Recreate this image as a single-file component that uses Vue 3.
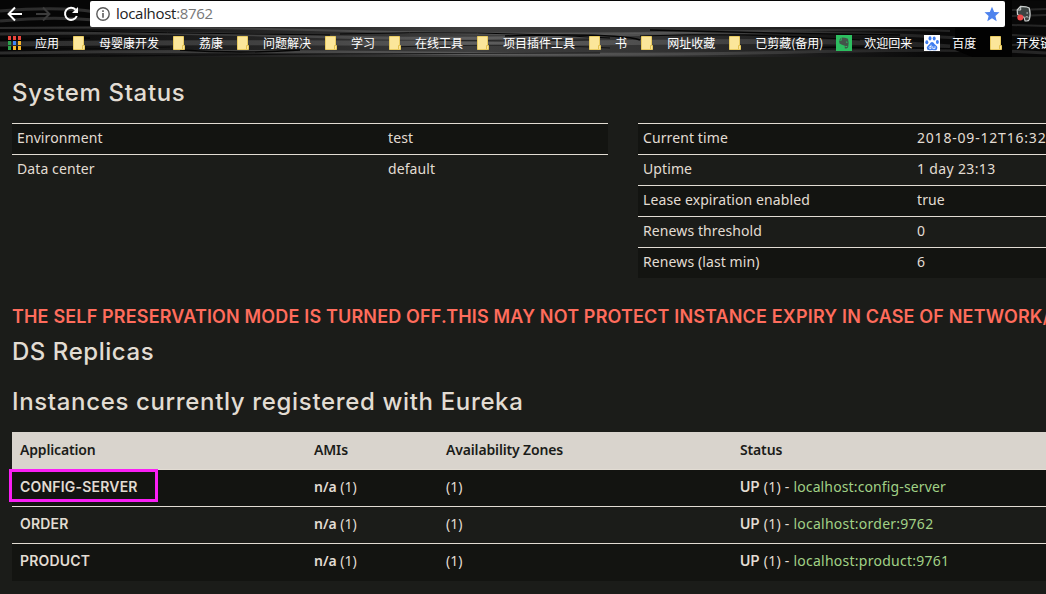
<script setup>
const bookmarks = [
  { label: '应用', icon: 'apps' },
  { label: '母婴康开发', icon: 'folder' },
  { label: '荔康', icon: 'folder' },
  { label: '问题解决', icon: 'folder' },
  { label: '学习', icon: 'folder' },
  { label: '在线工具', icon: 'folder' },
  { label: '项目插件工具', icon: 'folder' },
  { label: '书', icon: 'folder' },
  { label: '网址收藏', icon: 'folder' },
  { label: '已剪藏(备用)', icon: 'folder', wide: true },
  { label: '欢迎回来', icon: 'evernote' },
  { label: '百度', icon: 'baidu' },
  { label: '开发链', icon: 'folder' },
]
const appColors = ['#e8453c', '#e8453c', '#e8453c', '#2ba24c', '#4285f4', '#f9b529', '#2ba24c', '#f9b529', '#f9b529']

const environment = [
  ['Environment', 'test'],
  ['Data center', 'default'],
]
const runtime = [
  { name: 'Current time', value: '2018-09-12T16:32', cls: 'time' },
  { name: 'Uptime', value: '1 day 23:13', cls: 'digits' },
  { name: 'Lease expiration enabled', value: 'true' },
  { name: 'Renews threshold', value: '0' },
  { name: 'Renews (last min)', value: '6' },
]
const instances = [
  { app: 'CONFIG-SERVER', host: 'localhost:config-server', marked: true },
  { app: 'ORDER', host: 'localhost:order:9762', cls: 'wider' },
  { app: 'PRODUCT', host: 'localhost:product:9761', cls: 'wider' },
]
</script>

<template>
  <div class="window">
    <header class="chrome">
      <svg class="texture" width="1046" height="58" viewBox="0 0 1046 58" preserveAspectRatio="none">
        <defs>
          <linearGradient id="base" x1="0" x2="1" y1="0" y2="0">
            <stop offset="0" stop-color="#060606" />
            <stop offset=".12" stop-color="#141414" />
            <stop offset=".32" stop-color="#2c2c2c" />
            <stop offset=".45" stop-color="#3e3e3e" />
            <stop offset=".62" stop-color="#333" />
            <stop offset=".8" stop-color="#171717" />
            <stop offset=".9" stop-color="#080808" />
            <stop offset="1" stop-color="#080808" />
          </linearGradient>
          <linearGradient id="sheen" gradientUnits="userSpaceOnUse" x1="0" x2="1046" y1="0" y2="0">
            <stop offset="0" stop-color="#444" stop-opacity=".6" />
            <stop offset=".3" stop-color="#555" stop-opacity=".65" />
            <stop offset=".45" stop-color="#6c6c6c" stop-opacity=".7" />
            <stop offset=".65" stop-color="#5c5c5c" stop-opacity=".6" />
            <stop offset=".85" stop-color="#3c3c3c" stop-opacity=".5" />
            <stop offset="1" stop-color="#3a3a3a" stop-opacity=".6" />
          </linearGradient>
        </defs>
        <rect width="1046" height="58" fill="url(#base)" />
        <rect width="90" height="26" fill="#060606" />
        <rect width="1046" height="1" fill="#060606" />
        <g fill="none" stroke="url(#sheen)">
          <path stroke-width="3" d="M0 11Q60 6 95 12M0 21Q50 16 95 20" />
          <path stroke-width="2" d="M0 28Q180 26 350 31T700 32T950 31" />
          <path stroke-width="3" d="M0 34Q150 31 300 36T620 35T960 38" />
          <path stroke-width="5" d="M0 44Q170 42 340 43T690 42T950 47" />
          <path stroke-width="3" d="M0 53Q210 50 420 53T800 52T1046 53" />
          <path stroke-width="2" d="M1012 10L1046 9M1012 16L1046 15M1012 25L1046 26M1012 35L1046 37M1012 45L1046 44" />
        </g>
        <g fill="none" stroke="#050505">
          <path stroke-width="1" d="M20 30Q160 33 330 35M340 34Q480 30 610 38M640 36Q740 32 860 40" />
          <path stroke-width="1.5" d="M0 40L90 38M180 50Q240 54 300 50M505 36Q620 33 640 40M650 30Q760 33 900 35M760 48Q850 46 960 49" />
          <path stroke-width="1" opacity=".7" d="M390 47Q520 43 610 48M420 40Q500 42 590 40M0 48Q100 50 170 47M100 56Q350 53 600 53" />
        </g>
        <path d="M1005 0H1012V58H975L955 50V28H1005Z" fill="#020202" />
        <rect y="57" width="1046" height="1" fill="#1b1c19" />
      </svg>

      <div class="toolbar">
        <svg class="nav" width="90" height="28" viewBox="0 0 90 28" fill="none" stroke-width="2">
          <path d="M22 14H9M15 7.5L8.6 14L15 20.5" stroke="#fff" />
          <path d="M36 14H49M43 7.5L49.4 14L43 20.5" stroke="#3c3c3c" />
          <path d="M75.6 9.6A6.1 6.1 0 1 0 76.8 16" stroke="#fff" />
          <path d="M78 7V13H72Z" fill="#fff" />
        </svg>
        <div class="omnibox">
          <svg width="14" height="14" viewBox="0 0 14 14">
            <circle cx="7" cy="7" r="6.2" fill="none" stroke="#5a5a5a" stroke-width="1.4" />
            <path d="M6.2 3.3H7.8V4.9H6.2ZM6.2 6.1H7.8V10.7H6.2Z" fill="#5a5a5a" />
          </svg>
          <span class="url">localhost<i>:8762</i></span>
          <svg class="star" width="16" height="16" viewBox="0 0 16 16">
            <path d="M8 .8L10.2 5.9L15.5 6.3L11.4 9.9L12.7 15.2L8 12.3L3.3 15.2L4.6 9.9L.5 6.3L5.8 5.9Z" fill="#4e83ed" />
          </svg>
        </div>
        <svg class="ext" width="16" height="18" viewBox="0 0 16 18">
          <path d="M4.5 1.3L10 1.8L13.2 3Q15 9 13.3 14.5Q12.5 16.5 9 15.8L8 12.2L5 11.5L1.5 9.5L1.2 5Z" fill="#3c4342" stroke="#ccd0cf" stroke-width="1.2" />
          <path d="M4.7 1.5V5H1.4M9.4 12.2Q11 11 12.4 12.4M10.4 8H12" fill="none" stroke="#ccd0cf" />
          <circle cx="4.3" cy="12.6" r="3" fill="#f44b4b" />
        </svg>
      </div>

      <nav class="bookmarks">
        <div v-for="b in bookmarks" :key="b.label" class="bookmark" :class="{ wide: b.wide }">
          <svg v-if="b.icon === 'apps'" width="16" height="16" viewBox="0 0 16 16">
            <rect v-for="(c, i) in appColors" :key="i" :x="1 + (i % 3) * 5" :y="1 + Math.floor(i / 3) * 5" width="3" height="4" :fill="c" />
          </svg>
          <svg v-else-if="b.icon === 'folder'" width="16" height="16" viewBox="0 0 16 16">
            <path d="M2.5 1.5H12.5V10.5H13.5V14.5H2.5Z" fill="#fbe69a" stroke="#e9cb61" />
            <path d="M11.5 14V10.5H13" fill="none" stroke="#e3c14f" />
          </svg>
          <svg v-else-if="b.icon === 'evernote'" width="16" height="16" viewBox="0 0 16 16">
            <rect width="16" height="16" fill="#2dbe60" />
            <path d="M5.8 2.5L9 2.8L12 3.8Q13.2 8 12.2 12Q11.5 14 8.8 13.2V10.8L6 9.8L3.5 8.5L3 5.4H5.8Z" fill="#43544a" />
            <path d="M3.2 4.8L5.2 2.8V4.8Z" fill="#43544a" />
            <path d="M9.7 12V11.5H11.2M10 7L11.4 7.3" stroke="#2dbe60" fill="none" />
          </svg>
          <svg v-else width="16" height="16" viewBox="0 0 16 16">
            <rect width="16" height="16" fill="#fff" />
            <g fill="#3f7df0">
              <ellipse cx="2.8" cy="7.3" rx="1.5" ry="2" />
              <ellipse cx="6" cy="3.4" rx="1.5" ry="2.1" />
              <ellipse cx="10.2" cy="3.5" rx="1.5" ry="2.1" />
              <ellipse cx="13.4" cy="7" rx="1.5" ry="2" />
              <path d="M8 7Q9.5 7 10.5 9L13 11.2Q14.2 13.5 12.5 15Q11 15.6 8 15Q4.8 15.7 3.2 14.6Q2 12.5 3.8 10.8L5.7 8.9Q6.6 7 8 7Z" />
            </g>
            <path d="M7 9.7V13.6H5.6Q4.5 12.7 5.6 11.5H7M8.8 11.2V13.6H11V11.2" fill="none" stroke="#fff" stroke-width=".8" />
          </svg>
          <span>{{ b.label }}</span>
        </div>
      </nav>
    </header>

    <main class="page">
      <h1>System Status</h1>
      <div class="status">
        <div class="facts left">
          <div v-for="[name, value] in environment" :key="name" class="fact">
            <span>{{ name }}</span><span>{{ value }}</span>
          </div>
        </div>
        <div class="facts right">
          <div v-for="r in runtime" :key="r.name" class="fact">
            <span>{{ r.name }}</span><span :class="r.cls">{{ r.value }}</span>
          </div>
        </div>
      </div>

      <h4>THE SELF PRESERVATION MODE IS TURNED OFF.THIS MAY NOT PROTECT INSTANCE EXPIRY IN CASE OF NETWORK/</h4>
      <h1 class="replicas">DS Replicas</h1>
      <h1 class="registered">Instances currently registered with Eureka</h1>

      <section class="instances">
        <div class="row head">
          <span>Application</span><span>AMIs</span><span>Availability Zones</span><span>Status</span>
        </div>
        <div v-for="i in instances" :key="i.app" class="row">
          <span class="cell-app"><b class="caps">{{ i.app }}</b><span v-if="i.marked" class="marker"></span></span>
          <span><b>n/a</b> (1)</span>
          <span>(1)</span>
          <span class="state"><b class="up">UP</b> (1) - <a :class="i.cls">{{ i.host }}</a></span>
        </div>
      </section>
    </main>
  </div>
</template>

<style>
html, body { margin: 0; background: #1b1c19; overflow: hidden; }
</style>

<style scoped>
.window {
  width: 1046px;
  height: 594px;
  overflow: hidden;
  background: #1b1c19;
  color: #e2dcd3;
  font: 14px/20px "Noto Sans", sans-serif;
}
.chrome { position: relative; height: 58px; overflow: hidden; }
.texture { position: absolute; inset: 0; }
.toolbar { position: relative; display: flex; height: 28px; }
.nav { flex: none; }
.omnibox {
  box-sizing: border-box;
  display: flex;
  align-items: center;
  width: 915px;
  height: 26px;
  margin-top: 1px;
  padding: 0 5px 0 6px;
  border-radius: 2px;
  background: #fff;
}
.url {
  flex: 1;
  margin: -2px 0 0 6px;
  color: #222;
  font: 15px/24px "Open Sans", sans-serif;
  letter-spacing: -0.3px;
}
.url i { color: #777; font-style: normal; }
.ext { margin: 5px 0 0 11px; }
.bookmarks { position: relative; display: flex; gap: 12px; padding: 7px 0 0 7px; }
.bookmark { display: flex; flex: none; gap: 12px; height: 16px; }
.bookmark svg { flex: none; }
.bookmark span {
  color: #fff;
  font: 12px/16px "Noto Sans CJK SC", sans-serif;
  white-space: nowrap;
}
.bookmark.wide span { width: 69px; }

.page { padding: 20px 0 0 12px; }
h1 {
  margin: 0;
  font: 500 24px/30px Inter, sans-serif;
  letter-spacing: 0.65px;
  white-space: nowrap;
}
.status { display: flex; gap: 30px; margin-top: 15px; align-items: flex-start; }
.facts { flex: none; }
.left { width: 596px; }
.right { width: 596px; }
.fact {
  display: grid;
  box-sizing: border-box;
  height: 31px;
  padding: 4px 5px 6px;
  border-top: 1px solid #e2dcd3;
  line-height: 19px;
  letter-spacing: 0.1px;
  white-space: nowrap;
}
.left .fact { grid-template-columns: 371px 1fr; }
.right .fact { grid-template-columns: 274px 1fr; }
.fact:nth-child(odd) { background: #131411; }
.time { letter-spacing: 0.8px; }
.digits { letter-spacing: 0.35px; }

h4 {
  margin: 28px 0 0;
  color: #ff6c5c;
  font: 600 18px/22px Inter, sans-serif;
  letter-spacing: 0.16px;
  white-space: nowrap;
}
.replicas { margin-top: 9px; letter-spacing: 0.55px; }
.registered { margin-top: 20px; }

.instances { margin-top: 15px; }
.row {
  display: grid;
  grid-template-columns: 294px 132px 294px 1fr;
  box-sizing: border-box;
  height: 37px;
  padding: 7px 8px 0;
  border-bottom: 1px solid #e2dcd3;
  white-space: nowrap;
}
.row:nth-child(even) { background: #131411; }
.row:last-child { border-bottom: 0; }
.row.head {
  height: 38px;
  padding-top: 8px;
  background: #d9d4cd;
  color: #1b1c19;
  font-weight: 600;
  letter-spacing: -0.15px;
}
b { font-weight: 600; }
.caps { font-family: Inter, sans-serif; letter-spacing: 0.2px; }
.up { font-family: Inter, sans-serif; }
.state { letter-spacing: 0.25px; }
a { color: #a1d186; letter-spacing: 0.13px; }
a.wider { letter-spacing: 0.25px; }
.cell-app { position: relative; }
.marker {
  position: absolute;
  left: -11px;
  top: -8px;
  box-sizing: border-box;
  width: 149px;
  height: 33px;
  border: 3px solid #fa1ef5;
}
</style>
